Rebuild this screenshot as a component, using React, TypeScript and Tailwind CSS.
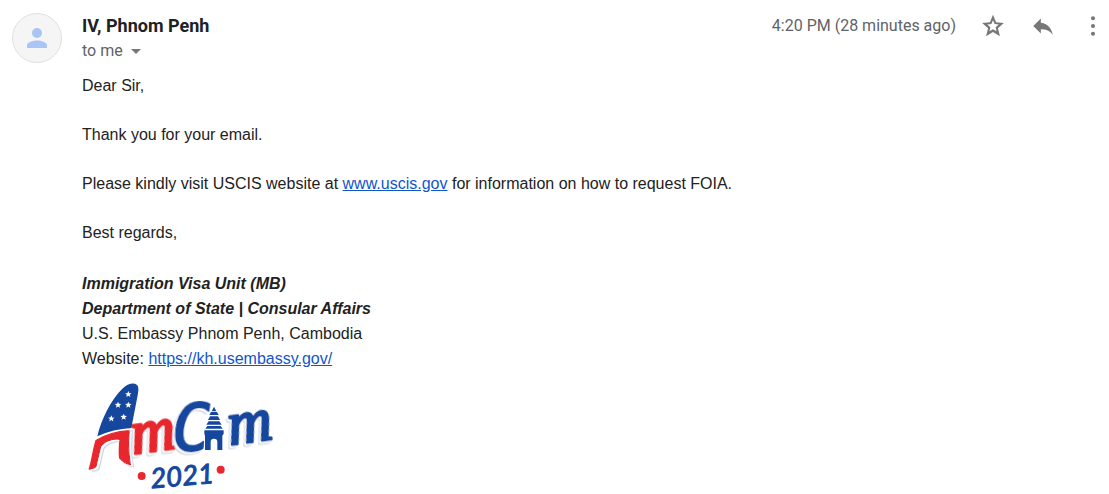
import React from "react";

const STARS: [number, number][] = [
  [157, 70],
  [126, 102],
  [157, 102],
  [106, 143],
  [143, 138],
];

const STAR_PATH = "M0-10 2.8-3.4 9.8-3.1 4.3 1.3 6.2 8.2 0 4.3-6.2 8.2-4.3 1.3-9.8-3.1-2.8-3.4Z";

function AmCamLogo() {
  return (
    <svg viewBox="18 0 612 372" className="block h-[124px] w-[204px]" role="img" aria-label="AmCam 2021">
      <defs>
        <filter id="edge" x="-10%" y="-10%" width="120%" height="120%">
          <feDropShadow dx="-5" dy="5" stdDeviation="0" floodColor="#fff" result="gap" />
          <feDropShadow in="gap" dx="-3" dy="3" stdDeviation="0.8" floodColor="#c3d2e3" />
        </filter>
        <filter id="edge-right" x="-10%" y="-10%" width="130%" height="130%">
          <feDropShadow dx="6" dy="4" stdDeviation="0" floodColor="#fff" result="gap" />
          <feDropShadow in="gap" dx="3" dy="3" stdDeviation="0.8" floodColor="#c3d2e3" />
        </filter>
      </defs>
      <path
        filter="url(#edge-right)"
        fill="#e8282d"
        stroke="#e8282d"
        strokeWidth="4"
        strokeLinejoin="round"
        d="M60 209C90 190 125 181 160 179C156 215 158 250 163 281C151 279 140 271 131 261C129 242 130 224 132 205C108 202 84 211 74 227L60 286C57 292 49 292 40 294C48 270 51 238 60 209Z"
      />
      <g fontStyle="italic" strokeLinejoin="round" strokeLinecap="round">
        <text filter="url(#edge)" x="172" y="249" fontSize="184" fontFamily="'Liberation Serif', serif" fill="#e8282d" stroke="#e8282d" strokeWidth="10" transform="rotate(-8 172 249)">m</text>
        <text filter="url(#edge)" x="290" y="241" fontSize="194" fontFamily="'DejaVu Sans Mono', monospace" fill="#15479f" stroke="#15479f" strokeWidth="6" transform="rotate(-2 290 241)">C</text>
        <text filter="url(#edge)" x="462" y="221" fontSize="184" fontFamily="'Liberation Serif', serif" fill="#15479f" stroke="#15479f" strokeWidth="9" transform="rotate(-8 462 221)">m</text>
      </g>
      <path
        fill="#15479f"
        d="M64 196C75 147 105 85 139 53C153 39 173 34 182 41C190 47 187 61 185 73L166 171C130 173 96 181 64 196Z"
      />
      {STARS.map(([x, y]) => (
        <path key={`${x}-${y}`} d={STAR_PATH} fill="#fff" transform={`translate(${x} ${y})`} />
      ))}
      <path
        fill="#15479f"
        stroke="#fff"
        strokeWidth="5"
        paintOrder="stroke"
        d="M414 107L421 121H407ZM405 123H423L428 132H400ZM402 136H426L432 147H396ZM398 151H430L437 161H391ZM394 165H434L440 173H388ZM385 178H443V188L439 194V237H424V212Q424 203 414 203Q404 203 404 212V237H387V194L385 188Z"
      />
      <text
        x="226"
        y="352"
        fontSize="82"
        fontStyle="italic"
        fontFamily="Lato, sans-serif"
        fill="#15479f"
        stroke="#15479f"
        strokeWidth="3"
        strokeLinejoin="round"
        transform="rotate(-5 226 352)"
      >
        2021
      </text>
      <circle cx="197" cy="315" r="12" fill="#e8282d" />
      <circle cx="434" cy="296" r="12" fill="#e8282d" />
    </svg>
  );
}

function Avatar() {
  return (
    <div className="flex size-[50px] shrink-0 items-center justify-center rounded-full border border-[#e0e0e0] bg-[#f5f5f5]">
      <svg viewBox="0 0 20 20" className="size-5" fill="#a8c5f5" aria-hidden="true">
        <circle cx="10" cy="5" r="5" />
        <path d="M0 20V17.5C0 14 6 12.5 10 12.5S20 14 20 17.5V20Z" />
      </svg>
    </div>
  );
}

function IconButton({ label, path }: { label: string; path: string }) {
  return (
    <button type="button" aria-label={label} className="flex size-[26px] items-center justify-center text-[#777]">
      <svg viewBox="0 0 24 24" className="size-[26px]" fill="currentColor" aria-hidden="true">
        <path d={path} />
      </svg>
    </button>
  );
}

const STAR =
  "M22 9.24l-7.19-.62L12 1.6 9.19 8.63 2 9.24l5.46 4.73L5.6 21.4 12 17.5 18.4 21.4l-1.85-7.43L22 9.24zM12 14.9l-3.3 2 .9-3.8-2.9-2.5 3.8-.35L12 6.7l1.5 3.55 3.8.35-2.9 2.5.9 3.8L12 14.9z";
const REPLY = "M10 9V5l-7 7 7 7v-4.1c5 0 8.5 1.6 11 5.1-1-5-4-10-11-11z";
const MORE =
  "M12 6.7a1.9 1.9 0 1 0 0-3.8 1.9 1.9 0 0 0 0 3.8zm0 3.4a1.9 1.9 0 1 0 0 3.8 1.9 1.9 0 0 0 0-3.8zm0 7.2a1.9 1.9 0 1 0 0 3.8 1.9 1.9 0 0 0 0-3.8z";

export default function App() {
  return (
    <article className="flex gap-5 bg-white pt-[13px] pl-3 font-['Liberation_Sans',Arial,sans-serif] text-base text-[#222]">
      <Avatar />
      <div className="min-w-0 flex-1">
        <header className="flex items-start justify-between font-[Roboto,sans-serif]">
          <div>
            <h1 className="text-lg leading-[26px] font-bold text-[#202124]">IV, Phnom Penh</h1>
            <button type="button" className="flex items-center gap-2 leading-6 text-[#5f6368]">
              to me
              <svg viewBox="0 0 10 5" className="h-[5px] w-[10px]" fill="#777" aria-hidden="true">
                <path d="M0 0H10L5 5Z" />
              </svg>
            </button>
          </div>
          <div className="flex items-center gap-6 pr-[3px]">
            <time className="leading-[26px] text-[#5f6368]">4:20 PM (28 minutes ago)</time>
            <IconButton label="Star" path={STAR} />
            <IconButton label="Reply" path={REPLY} />
            <IconButton label="More" path={MORE} />
          </div>
        </header>
        <div className="flex flex-col gap-6 pt-[10px] leading-[25px]">
          <p>Dear Sir,</p>
          <p>Thank you for your email.</p>
          <p>
            Please kindly visit USCIS website at{" "}
            <a href="https://www.uscis.gov" className="text-[#1155cc] underline">www.uscis.gov</a> for information on
            how to request FOIA.
          </p>
          <p>Best regards,</p>
        </div>
        <footer className="pt-[26px] leading-[25px]">
          <p className="font-bold italic">Immigration Visa Unit (MB)</p>
          <p className="font-bold italic">Department of State | Consular Affairs</p>
          <p>U.S. Embassy Phnom Penh, Cambodia</p>
          <p>
            Website:{" "}
            <a href="https://kh.usembassy.gov/" className="text-[#1155cc] underline">https://kh.usembassy.gov/</a>
          </p>
          <AmCamLogo />
        </footer>
      </div>
    </article>
  );
}
